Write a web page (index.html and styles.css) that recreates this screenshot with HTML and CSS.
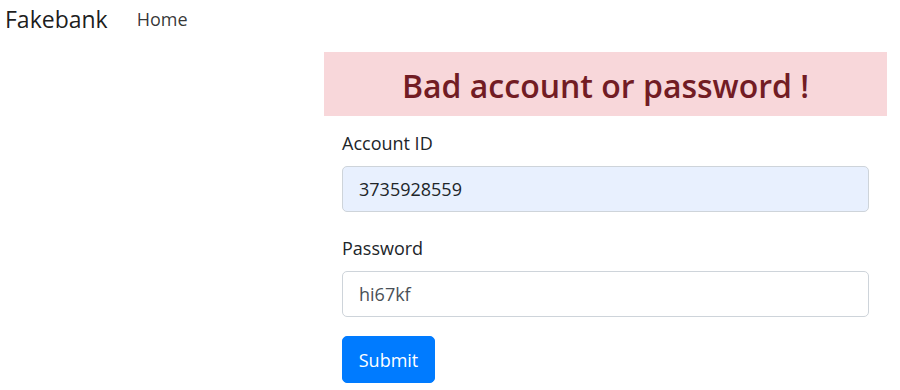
FILE: index.html
```html
<!DOCTYPE html>
<html>
<head>
<meta charset="utf-8">
<link rel="stylesheet" href="styles.css">
</head>
<body>
<nav class="navbar">
  <a class="brand">Fakebank</a>
  <a class="nav-link">Home</a>
</nav>
<main class="page">
  <section class="panel">
    <div class="alert">Bad account or password !</div>
    <form class="form">
      <div class="group">
        <label class="label">Account ID</label>
        <div class="input autofill">3735928559</div>
      </div>
      <div class="group">
        <label class="label">Password</label>
        <div class="input">hi67kf</div>
      </div>
      <button class="btn" type="button">Submit</button>
    </form>
  </section>
</main>
</body>
</html>
```
FILE: styles.css
```css
* { box-sizing: border-box; }
body {
  margin: 0;
  font-family: "Open Sans", "Noto Sans", sans-serif;
  color: #212529;
  background: #fff;
}
.navbar {
  display: flex;
  align-items: center;
  height: 38px;
  padding-left: 5px;
}
.brand {
  font-size: 23px;
  color: rgba(0,0,0,.9);
  margin-right: 29px;
}
.nav-link {
  font-size: 18px;
  color: rgba(0,0,0,.8);
}
.page {
  display: flex;
  justify-content: flex-end;
  padding: 14px 13px 0 0;
}
.panel {
  width: 563px;
}
.alert {
  height: 64px;
  padding-top: 3px;
  background: #f8d7da;
  color: #721c24;
  font-size: 32px;
  font-weight: 600;
  display: flex;
  align-items: center;
  justify-content: center;
}
.form {
  padding: 13px 18px 0;
}
.group {
  margin-bottom: 22px;
}
.label {
  display: block;
  font-size: 18px;
  line-height: 29px;
  margin-bottom: 8px;
}
.input {
  height: 46px;
  border: 1px solid #ced4da;
  border-radius: 5px;
  padding: 0 16px;
  display: flex;
  align-items: center;
  font-size: 18px;
  color: #495057;
}
.input.autofill {
  background: #e8f0fe;
  color: #212529;
}
.btn {
  margin-top: -3px;
  width: 93px;
  height: 47px;
  background: #007bff;
  border: 1px solid #007bff;
  border-radius: 5px;
  color: #fff;
  font-family: inherit;
  font-size: 18px;
  padding: 0;
}
```
